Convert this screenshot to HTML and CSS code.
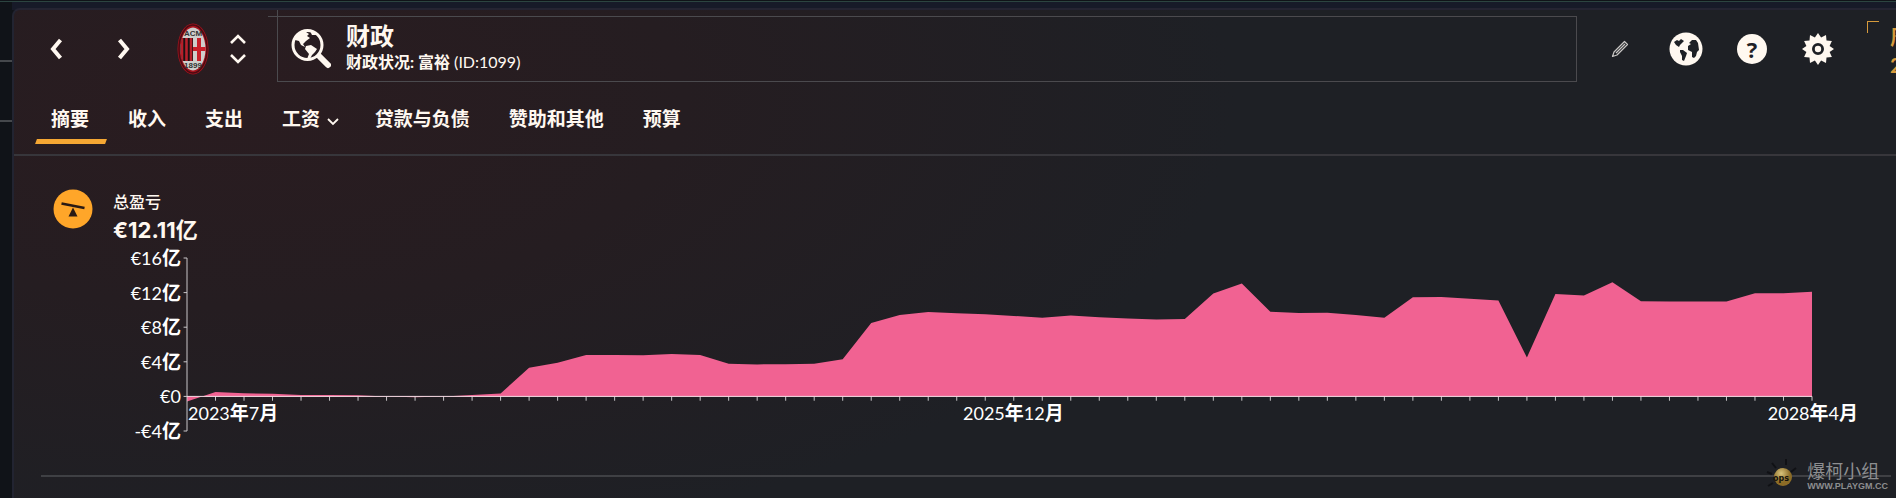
FILE: index.html
```html
<!DOCTYPE html>
<html lang="zh-CN">
<head>
    <meta charset="UTF-8">
    <meta name="viewport" content="width=device-width, initial-scale=1.0">
    <title>财政</title>
    <link rel="stylesheet" href="styles.css">
</head>
<body>
    <div class="panel">
        <header class="topbar">
            <button class="icon-btn nav-btn" aria-label="后退">
                <svg width="14" height="22" viewBox="0 0 14 22"><path d="M11.500 2 L4 11 L11.500 20" fill="none" stroke="#fff8f0" stroke-width="4"/></svg>
            </button>
            <button class="icon-btn nav-btn" aria-label="前进">
                <svg width="14" height="22" viewBox="0 0 14 22"><path d="M2.500 2 L10 11 L2.500 20" fill="none" stroke="#fff8f0" stroke-width="4"/></svg>
            </button>
            <svg class="crest" width="32" height="52" viewBox="0 0 32 52">
                <defs><clipPath id="shield"><ellipse cx="16" cy="26" rx="12.500" ry="21.500"/></clipPath></defs>
                <ellipse cx="16" cy="26" rx="15.500" ry="25.500" fill="#a5141e"/>
                <ellipse cx="16" cy="26" rx="14" ry="24" fill="none" stroke="#4d0a12" stroke-width="1.500"/>
                <g clip-path="url(#shield)">
                    <rect width="32" height="52" fill="#cfcecc"/>
                    <rect y="15" width="16" height="23" fill="#1a1214"/>
                    <path d="M5 15v23M9.500 15v23M14 15v23" stroke="#b81f2a" stroke-width="2.600"/>
                    <path d="M22 15v23M16 26h16" stroke="#c91f2a" stroke-width="4"/>
                </g>
                <text class="crest-text" x="16" y="13">ACM</text>
                <text class="crest-text" x="16" y="45">1899</text>
            </svg>
            <div class="stepper">
                <button class="icon-btn" aria-label="上一个"><svg width="18" height="12" viewBox="0 0 18 12"><path d="M2 10 L9 3 L16 10" fill="none" stroke="#fff8f0" stroke-width="2.600"/></svg></button>
                <button class="icon-btn" aria-label="下一个"><svg width="18" height="12" viewBox="0 0 18 12"><path d="M2 2 L9 9 L16 2" fill="none" stroke="#fff8f0" stroke-width="2.600"/></svg></button>
            </div>
            <div class="title-box">
                <svg width="40" height="44" viewBox="0 0 40 44">
                    <circle cx="16.500" cy="18" r="14.500" fill="none" stroke="#fff8f0" stroke-width="3"/>
                    <path d="M4 11 L10 4 L16 3 L15 5 L18 7 L16 9 L19 11 L15 14 L12 17 L14 20 L10 18 L8 14 L4 13 Z M19 4 L24 5 L25 8 L21 8 Z" fill="#fff8f0"/>
                    <path d="M15 19 L20 18 L26 22 L24 25 L21 28 L19 32 L16 32 L18 27 L14 22 Z" fill="#fff8f0"/>
                    <path d="M29 30 L37 38" stroke="#fff8f0" stroke-width="6" stroke-linecap="round"/>
                </svg>
                <div>
                    <h1>财政</h1>
                    <p class="status"><b>财政状况: 富裕</b> (ID:1099)</p>
                </div>
            </div>
            <div class="tools">
                <button class="icon-btn" aria-label="编辑">
                    <svg width="18" height="18" viewBox="0 0 18 18"><path d="M1.500 16.500 L3 12 L13.500 1.500 L16.500 4.500 L6 15 Z M5 13 L14 4" fill="none" stroke="#c9c7c5" stroke-width="1.200" stroke-linejoin="round"/></svg>
                </button>
                <button class="icon-btn" aria-label="世界">
                    <svg width="34" height="34" viewBox="0 0 34 34">
                        <circle cx="17" cy="17" r="16.500" fill="#fff8f0"/>
                        <path d="M5 10 L8 8 L10 9 L12 7 L15 9 L13 11 L11 13 L10 15 L7 13 Z M11 18 L14 18 L18 21 L17 24 L15 29 L13 28 L13 24 L11 20 Z M20 11 L23 8 L27 8 L29 11 L30 18 L28 20 L27 24 L25 26 L23 25 L23 20 L19 18 L19 14 L22 12 Z" fill="#1e2025"/>
                    </svg>
                </button>
                <button class="icon-btn help" aria-label="帮助">?</button>
                <button class="icon-btn" aria-label="设置">
                    <svg width="34" height="34" viewBox="-17 -17 34 34">
                        <polygon fill="#fff8f0" points="0,-16 3.1,-11.6 8,-13.9 8.5,-8.5 13.9,-8 11.6,-3.1 16,0 11.6,3.1 13.9,8 8.5,8.5 8,13.9 3.1,11.6 0,16 -3.1,11.6 -8,13.9 -8.5,8.5 -13.9,8 -11.6,3.1 -16,0 -11.6,-3.1 -13.9,-8 -8.5,-8.5 -8,-13.9 -3.1,-11.6"/>
                        <circle r="4.600" fill="none" stroke="#1e2025" stroke-width="2.800"/>
                    </svg>
                </button>
            </div>
            <div class="continue"><span>周</span><span>2</span></div>
        </header>

        <nav class="tabs">
            <a class="tab active" href="#summary">摘要</a>
            <a class="tab" href="#income">收入</a>
            <a class="tab" href="#expenses">支出</a>
            <a class="tab" href="#wages">工资 <svg class="caret" width="12" height="8" viewBox="0 0 12 8"><path d="M1 1 L6 6 L11 1" fill="none" stroke="#fff8f0" stroke-width="1.800"/></svg></a>
            <a class="tab" href="#loans">贷款与负债</a>
            <a class="tab" href="#sponsors">赞助和其他</a>
            <a class="tab" href="#budget">预算</a>
        </nav>

        <main class="content">
            <section class="summary" id="summary">
                <svg width="40" height="40" viewBox="0 0 40 40">
                    <circle cx="20" cy="20" r="19.500" fill="#ffa629"/>
                    <path d="M8.500 14.500 L31.500 19" stroke="#2a1a14" stroke-width="2.600"/>
                    <path d="M20 18.500 L24.500 27.500 L15.500 27.500 Z" fill="#2a1a14"/>
                </svg>
                <div>
                    <h2>总盈亏</h2>
                    <p class="total">€12.11亿</p>
                </div>
            </section>

            <div class="chart">
                <ul class="y-labels">
                    <li>€16<b>亿</b></li>
                    <li>€12<b>亿</b></li>
                    <li>€8<b>亿</b></li>
                    <li>€4<b>亿</b></li>
                    <li>€0</li>
                    <li>-€4<b>亿</b></li>
                </ul>
                <div class="plot">
                    <svg id="plot" viewBox="0 0 570 200" preserveAspectRatio="none">
                        <polygon id="area" class="area"/>
                        <path id="ticks" class="axis"/>
                        <path class="axis zero" d="M0 160H570"/>
                    </svg>
                    <div class="x-labels">
                        <span>2023<b>年</b>7<b>月</b></span>
                        <span>2025<b>年</b>12<b>月</b></span>
                        <span>2028<b>年</b>4<b>月</b></span>
                    </div>
                </div>
            </div>
        </main>

        <footer class="footer">
            <div class="watermark">
                <svg width="34" height="34" viewBox="0 0 34 34">
                    <defs><radialGradient id="ball" cx="40%" cy="30%"><stop offset="0" stop-color="#d8c47c"/><stop offset="1" stop-color="#8c6c26"/></radialGradient></defs>
                    <path d="M6 4l4 5M20 0v6M30 9l-5 4M1 13l5 2M2 27l5-3" stroke="#101115" stroke-width="2"/>
                    <circle cx="17" cy="18" r="9" fill="url(#ball)"/>
                    <text class="ball-text" x="15" y="22">ops</text>
                </svg>
                <div>
                    <p class="wm-name">爆柯小组</p>
                    <p class="wm-url">WWW.PLAYGM.CC</p>
                </div>
            </div>
        </footer>
    </div>
    <script src="script.js"></script>
</body>
</html>
```

FILE: styles.css
```css
body {
    margin: 0;
    padding: 8px 0 0 12px;
    min-height: 100vh;
    box-sizing: border-box;
    overflow-x: hidden;
    background:
        linear-gradient(#2c4440, #2c4440) 0 1px / 100% 1px no-repeat,
        linear-gradient(#171a28, #171a28) 12px 2px / 100% 8px no-repeat,
        linear-gradient(#45484c, #45484c) 0 60px / 13px 2px no-repeat,
        linear-gradient(#45484c, #45484c) 0 120px / 13px 2px no-repeat,
        #101318;
    color: #fff8f0;
    font-family: Lato, "Noto Sans CJK SC", sans-serif;
}
h1, h2, p, ul {
    margin: 0;
    padding: 0;
    font-weight: normal;
}
.panel {
    min-height: calc(100vh - 8px);
    box-sizing: border-box;
    border-left: 2px solid #222431;
    border-top: 2px solid #252432;
    border-top-left-radius: 8px;
    background: radial-gradient(ellipse 1000px 460px at 220px 90px, #2a1c20 0%, #251d21 45%, #1e2025 100%);
}
.icon-btn {
    background: none;
    border: none;
    padding: 0;
    color: inherit;
    cursor: pointer;
    display: flex;
    align-items: center;
    justify-content: center;
}

/* top bar */
.topbar {
    display: flex;
    align-items: center;
    padding: 5px 0 0 8px;
    height: 68px;
}
.nav-btn {
    width: 68px;
    height: 60px;
}
.crest {
    margin-left: 19px;
    flex: none;
}
.crest-text {
    font: bold 8px "Liberation Sans", sans-serif;
    text-anchor: middle;
    fill: #333;
}
.stepper {
    display: flex;
    flex-direction: column;
    gap: 8px;
    margin: 0 30px 0 20px;
}
.title-box {
    position: relative;
    flex: 1;
    height: 66px;
    box-sizing: border-box;
    display: flex;
    align-items: center;
    gap: 15px;
    padding-left: 13px;
    border: 1px solid #4b4a4e;
}
/* frame lines run past the top left corner */
.title-box::before {
    content: "";
    position: absolute;
    left: -10px;
    top: -7px;
    width: 9px;
    height: 6px;
    border-right: 1px solid #4b4a4e;
    border-bottom: 1px solid #4b4a4e;
}
.title-box h1 {
    font-size: 24px;
    line-height: 26px;
    font-weight: bold;
}
.status {
    font-size: 16px;
    line-height: 26px;
}
.tools {
    display: flex;
    align-items: center;
    gap: 32px;
    padding: 0 32px 0 26px;
}
.tools .icon-btn {
    width: 34px;
    height: 34px;
}
.tools .help {
    width: 30px;
    height: 30px;
    margin: 0 2px;
    border-radius: 50%;
    background: #fff8f0;
    color: #1e2025;
    font: bold 22px "Open Sans", sans-serif;
}
.continue {
    align-self: flex-start;
    width: 6px;
    height: 56px;
    margin-top: 6px;
    padding: 2px 0 0 23px;
    overflow: hidden;
    background:
        linear-gradient(#d69a3c, #d69a3c) 0 0 / 12px 1px no-repeat,
        linear-gradient(#d69a3c, #d69a3c) 0 0 / 1px 12px no-repeat;
    color: #d69a3c;
    font-size: 20px;
    font-weight: bold;
}
.continue span {
    display: block;
    line-height: 28px;
}

/* tabs */
.tabs {
    display: flex;
    padding: 15px 0 10px 22px;
    border-bottom: 2px solid #37363b;
}
.tab {
    position: relative;
    padding: 0 16px 4px;
    margin-right: 7px;
    font-size: 19px;
    font-weight: bold;
    line-height: 42px;
    color: #fff8f0;
    text-decoration: none;
}
.tab.active {
    padding: 0 17px 4px 15px;
    margin-right: 6px;
}
.tab.active::after {
    content: "";
    position: absolute;
    left: 0;
    right: 0;
    bottom: 0;
    height: 5px;
    background: #f5a733;
    transform: skewX(-20deg);
}
.caret {
    margin-left: 2px;
    margin-right: -3px;
}

/* summary and chart */
.content {
    padding: 33px 84px 0 39px;
}
.summary {
    display: flex;
    align-items: flex-start;
    gap: 20px;
}
.summary h2 {
    font-size: 16px;
    line-height: 26px;
    font-weight: 500;
}
.total {
    font-family: Inter, "Noto Sans CJK SC", sans-serif;
    font-size: 22px;
    line-height: 30px;
    font-weight: bold;
}
.chart {
    display: flex;
    margin-top: 13px;
    font-size: 18px;
    line-height: 24px;
    color: #fff;
}
.chart b {
    font-size: 19px;
    line-height: 1;
}
.y-labels {
    width: 128px;
    height: 197px;
    margin: -12px 0;
    display: flex;
    flex-direction: column;
    justify-content: space-between;
    list-style: none;
    text-align: right;
}
.plot {
    flex: 1;
    margin-left: 6px;
}
.plot svg {
    display: block;
    width: 100%;
    height: 173px;
    overflow: visible;
}
.area {
    fill: #f16292;
}
.axis {
    fill: none;
    stroke: #c9c6c9;
    stroke-width: 1px;
    vector-effect: non-scaling-stroke;
}
.zero {
    stroke: #f6dde6;
}
/* the middle label sits on month 29 of 57 */
.x-labels {
    display: grid;
    grid-template-columns: 29fr auto 28fr;
    margin-top: -30px;
    padding-left: 1px;
}
.x-labels span:last-child {
    justify-self: end;
    margin-right: -46px;
}

/* footer */
.footer {
    position: relative;
    margin: 44px 5px 0 27px;
    border-top: 2px solid #3f4044;
}
.watermark {
    position: absolute;
    right: 3px;
    top: -18px;
    display: flex;
    align-items: center;
    gap: 7px;
    color: #8d8e90;
}
.ball-text {
    font: bold 8px "DejaVu Sans", sans-serif;
    text-anchor: middle;
    fill: #15130d;
}
.wm-name {
    font-size: 18px;
    line-height: 20px;
}
.wm-url {
    font: bold 9px "Liberation Sans", sans-serif;
    line-height: 10px;
}
```

FILE: script.js
```js
// total profit/loss per month in 亿, 2023-07 to 2028-04
const values = [
    -0.6, 0.5, 0.35, 0.3, 0.15, 0.15, 0.13, 0, -0.1, 0, 0.15, 0.33,
    3.3, 3.9, 4.8, 4.8, 4.75, 4.9, 4.8, 3.77, 3.7, 3.73, 3.77, 4.3,
    8.5, 9.4, 9.75, 9.6, 9.5, 9.3, 9.1, 9.35, 9.15, 9.0, 8.9, 8.95,
    11.9, 13.05, 9.8, 9.63, 9.66, 9.4, 9.1, 11.45, 11.5, 11.3, 11.1, 4.5,
    11.85, 11.67, 13.2, 11.0, 10.97, 10.97, 10.97, 11.93, 11.93, 12.1
];
const max = 16;
const min = -4;
const y = v => (max - v) * 10;

const points = values.map((v, i) => `${i * 10},${y(v)}`);
document.getElementById('area').setAttribute('points', `0,${y(0)} ${points.join(' ')} 570,${y(0)}`);

let d = `M0 ${y(max)}V${y(min)}`;
for (let v = min; v <= max; v += 4) {
    d += `M-1.2 ${y(v)}H0`;
}
values.forEach((v, i) => {
    if (i > 0) d += `M${i * 10} ${y(0)}v5`;
});
document.getElementById('ticks').setAttribute('d', d);
```
